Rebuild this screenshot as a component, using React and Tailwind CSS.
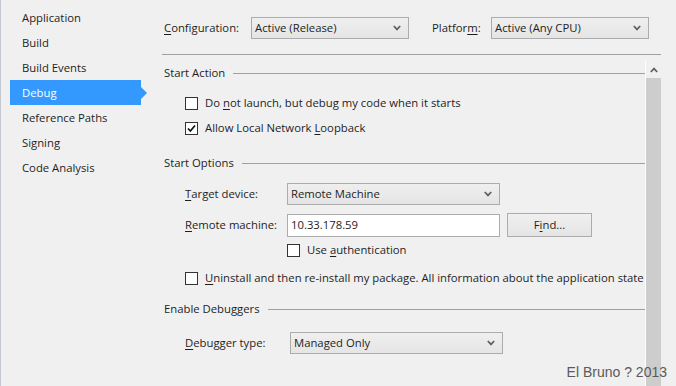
import React from "react";

const font = { fontFamily: '"Open Sans", "Noto Sans", sans-serif' };

function Chevron({ up }) {
  return (
    <svg width="8" height="6" viewBox="0 0 8 6" className="shrink-0">
      <path
        d={up ? "M0.8 5 L4 1.6 L7.2 5" : "M0.8 1 L4 4.4 L7.2 1"}
        fill="none"
        stroke="#5f5f5f"
        strokeWidth="1.7"
      />
    </svg>
  );
}

function Select({ value, width, className = "" }) {
  return (
    <div
      className={`h-[22px] flex items-center justify-between border border-[#acacac] bg-gradient-to-b from-[#efefef] to-[#e5e5e5] pl-[3px] pr-[7px] text-[#1e1e1e] ${width} ${className}`}
    >
      <span>{value}</span>
      <Chevron />
    </div>
  );
}

function Check({ checked }) {
  return (
    <div className="w-[13px] h-[13px] shrink-0 border border-[#333333] bg-white flex items-center justify-center">
      {checked && (
        <svg width="11" height="11" viewBox="0 0 11 11">
          <path d="M2 5.5 L4.4 8 L9 2.5" fill="none" stroke="#111" strokeWidth="1.7" />
        </svg>
      )}
    </div>
  );
}

function U({ children }) {
  return <span className="underline underline-offset-[2px] decoration-[1px]">{children}</span>;
}

function Heading({ children, className = "" }) {
  return (
    <div className={`h-[22px] flex items-center gap-[8px] pl-[2px] ${className}`}>
      <span className="whitespace-nowrap">{children}</span>
      <div className="flex-1 h-px bg-[#a0a0a0]" />
    </div>
  );
}

const items = ["Application", "Build", "Build Events", "Debug", "Reference Paths", "Signing", "Code Analysis"];

export default function App() {
  return (
    <div
      className="relative w-[676px] h-[386px] overflow-hidden bg-[#f0f0f0] text-[11.3px] text-[#1e1e1e] flex border-l border-[#c5c9d5]"
      style={font}
    >
      <div className="w-[149px] shrink-0 pt-[5px]">
        {items.map((it) => (
          <div
            key={it}
            className={`relative ml-[9px] w-[131px] h-[25px] pl-[12px] pt-[2px] flex items-center ${
              it === "Debug" ? "bg-[#3399ff] text-white" : ""
            }`}
          >
            {it}
            {it === "Debug" && (
              <div className="absolute left-full top-[7px] w-0 h-0 border-y-[6px] border-y-transparent border-l-[6px] border-l-[#3399ff]" />
            )}
          </div>
        ))}
      </div>

      <div className="w-[499px] ml-[12px] flex flex-col">
        <div className="flex items-center pt-[17px] pl-[2px]">
          <span className="w-[87px]">
            <U>C</U>onfiguration:
          </span>
          <Select value="Active (Release)" width="w-[158px]" />
          <span className="ml-[23px] w-[59px]">
            Platfor<U>m</U>:
          </span>
          <Select value="Active (Any CPU)" width="w-[158px]" />
        </div>
        <div className="mt-[15px] h-px bg-[#a0a0a0]" />

        <div className="mt-[6px] flex flex-1 min-h-0">
          <div className="w-[483px] overflow-hidden pt-[1px]">
            <Heading>Start Action</Heading>
            <div className="mt-[7px] h-[25px] pl-[23px] flex items-center gap-[7px]">
              <Check />
              <span>
                Do <U>n</U>ot launch, but debug my code when it starts
              </span>
            </div>
            <div className="h-[25px] pl-[23px] flex items-center gap-[7px]">
              <Check checked />
              <span>
                Allow Local Network <U>L</U>oopback
              </span>
            </div>

            <Heading className="mt-[11px]">Start Options</Heading>
            <div className="mt-[9px] pl-[23px] flex items-center">
              <span className="w-[102px]">
                <U>T</U>arget device:
              </span>
              <Select value="Remote Machine" width="w-[213px]" />
            </div>
            <div className="mt-[8px] pl-[23px] flex items-center">
              <span className="w-[102px]">
                <U>R</U>emote machine:
              </span>
              <div className="w-[213px] h-[23px] border border-[#acacac] bg-white pl-[3px] flex items-center">
                10.33.178.59
              </div>
              <div className="ml-[7px] w-[85px] h-[24px] border border-[#acacac] bg-gradient-to-b from-[#f0f0f0] to-[#e5e5e5] flex items-center justify-center">
                F<U>i</U>nd...
              </div>
            </div>
            <div className="mt-[1px] h-[25px] pl-[125px] flex items-center gap-[7px]">
              <Check />
              <span>
                Use <U>a</U>uthentication
              </span>
            </div>
            <div className="mt-[3px] h-[25px] pl-[23px] flex items-center gap-[7px] whitespace-nowrap">
              <Check />
              <span>
                <U>U</U>ninstall and then re-install my package. All information about the application state
              </span>
            </div>

            <Heading className="mt-[7px]">Enable Debuggers</Heading>
            <div className="mt-[12px] pl-[23px] flex items-center">
              <span className="w-[105px]">
                <U>D</U>ebugger type:
              </span>
              <Select value="Managed Only" width="w-[213px]" />
            </div>
          </div>

          <div className="w-[16px] border-l border-white flex flex-col">
            <div className="h-[17px] flex items-center justify-center">
              <Chevron up />
            </div>
            <div className="flex-1 bg-[#cdcdcd]" />
          </div>
        </div>
      </div>

      <div
        className="absolute right-[9px] bottom-[3px] text-[14px] text-[#5a5a5a]"
        style={{ fontFamily: '"Liberation Sans", Arial, sans-serif' }}
      >
        El Bruno ? 2013
      </div>
    </div>
  );
}
